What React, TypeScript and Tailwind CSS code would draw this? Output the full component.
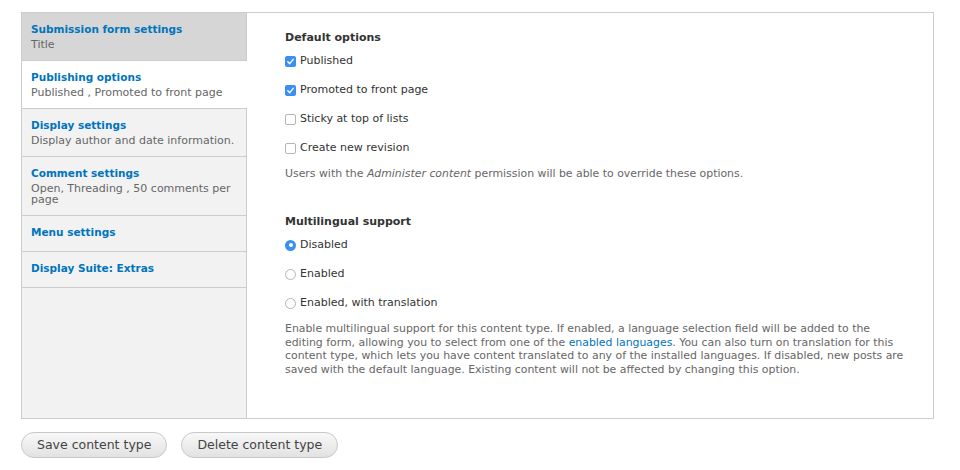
import { useState } from 'react';

const tabs = [
  { title: 'Submission form settings', summary: 'Title' },
  { title: 'Publishing options', summary: 'Published , Promoted to front page' },
  { title: 'Display settings', summary: 'Display author and date information.' },
  { title: 'Comment settings', summary: 'Open, Threading , 50 comments per page' },
  { title: 'Menu settings', summary: '' },
  { title: 'Display Suite: Extras', summary: '' },
];

const defaults = [
  { label: 'Published', checked: true },
  { label: 'Promoted to front page', checked: true },
  { label: 'Sticky at top of lists', checked: false },
  { label: 'Create new revision', checked: false },
];

const langOptions = ['Disabled', 'Enabled', 'Enabled, with translation'];

function Checkbox({ checked }: { checked: boolean }) {
  if (checked) {
    return (
      <span className="w-[11px] h-[11px] rounded-[2px] bg-[#3b8ff2] flex items-center justify-center shrink-0">
        <svg width="9" height="9" viewBox="0 0 10 10">
          <path d="M2 5.2 L4.2 7.4 L8 2.6" stroke="#fff" strokeWidth="1.6" fill="none" strokeLinecap="round" strokeLinejoin="round" />
        </svg>
      </span>
    );
  }
  return <span className="w-[11px] h-[11px] rounded-[2px] border border-[#b5b5b5] bg-white shrink-0" />;
}

function Radio({ checked }: { checked: boolean }) {
  if (checked) {
    return (
      <span className="w-[11px] h-[11px] rounded-full bg-[#3b8ff2] flex items-center justify-center shrink-0">
        <span className="w-[4px] h-[4px] rounded-full bg-white" />
      </span>
    );
  }
  return <span className="w-[11px] h-[11px] rounded-full border border-[#b5b5b5] bg-white shrink-0" />;
}

export default function App() {
  const [active, setActive] = useState(1);
  const [lang, setLang] = useState(0);

  return (
    <div className="w-[960px] h-[470px] bg-white pt-[12px] pl-[21px] text-[#333]" style={{ fontFamily: '"DejaVu Sans", Verdana, sans-serif' }}>
      <div className="w-[913px] h-[407px] flex border border-[#ccc] bg-white">
        <ul className="w-[225px] shrink-0 bg-[#f2f2f2] border-r border-[#ccc]">
          {tabs.map((t, i) => (
            <li
              key={t.title}
              onClick={() => setActive(i)}
              className={
                'pl-[9px] pr-2 border-b border-[#ccc] cursor-pointer ' +
                (i === active ? 'bg-white mr-[-1px] ' : i === 0 ? 'bg-[#d6d6d6] ' : '') +
                (t.summary ? 'pt-[9px] pb-[10px]' : 'pt-[9px] pb-[12px]')
              }
            >
              <div className="text-[10.5px] font-bold text-[#0074bd] leading-[14px]">{t.title}</div>
              {t.summary && <div className="text-[11px] text-[#666] leading-[11px] mt-[3px]">{t.summary}</div>}
            </li>
          ))}
        </ul>

        <div className="flex-1 pl-[38px] pt-[18px] pr-[26px]">
          <h3 className="text-[11px] font-bold text-[#333] leading-[14px]">Default options</h3>
          <div className="mt-[9px] flex flex-col gap-[15px]">
            {defaults.map((d) => (
              <label key={d.label} className="flex items-center gap-[4px] text-[11px] leading-[14px] text-[#333]">
                <Checkbox checked={d.checked} />
                {d.label}
              </label>
            ))}
          </div>
          <p className="mt-[12px] text-[10.9px] leading-[14px] text-[#666]">
            Users with the <em>Administer content</em> permission will be able to override these options.
          </p>

          <h3 className="mt-[34px] text-[11px] font-bold text-[#333] leading-[14px]">Multilingual support</h3>
          <div className="mt-[9px] flex flex-col gap-[15px]">
            {langOptions.map((o, i) => (
              <label key={o} onClick={() => setLang(i)} className="flex items-center gap-[4px] text-[11px] leading-[14px] text-[#333] cursor-pointer">
                <Radio checked={lang === i} />
                {o}
              </label>
            ))}
          </div>
          <p className="mt-[12px] text-[10.9px] leading-[13.5px] text-[#666]">
            Enable multilingual support for this content type. If enabled, a language selection field will be added to the
            editing form, allowing you to select from one of the <span className="text-[#0074bd]">enabled languages</span>. You can also
            turn on translation for this content type, which lets you have content translated to any of the installed languages.
            If disabled, new posts are saved with the default language. Existing content will not be affected by changing this
            option.
          </p>
        </div>
      </div>

      <div className="mt-[13px] flex gap-[14px]">
        <button className="h-[26px] px-[15px] rounded-full border border-[#c8c8c8] bg-gradient-to-b from-[#f8f8f8] to-[#e2e2e2] text-[12.5px] text-[#444]">
          Save content type
        </button>
        <button className="h-[26px] px-[15px] rounded-full border border-[#c8c8c8] bg-gradient-to-b from-[#f8f8f8] to-[#e2e2e2] text-[12.5px] text-[#444]">
          Delete content type
        </button>
      </div>
    </div>
  );
}
